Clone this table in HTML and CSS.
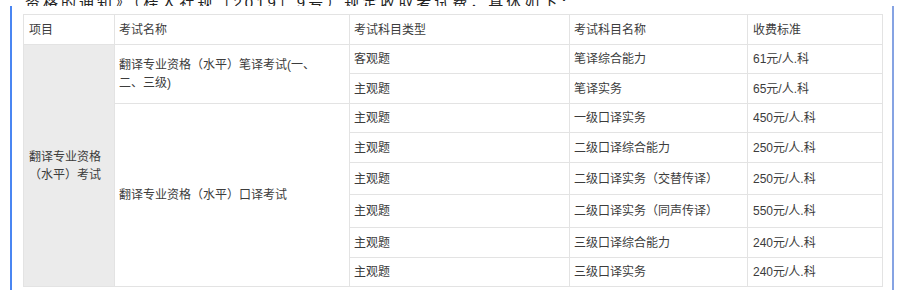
FILE: index.html
```html
<!DOCTYPE html>
<html lang="zh-CN">
<head>
<meta charset="utf-8">
<title>收费标准</title>
<link rel="stylesheet" href="styles.css">
</head>
<body>
<p class="lead">资格的通知》（桂人社规〔2019〕9号）规定收取考试费，具体如下：</p>
<div class="frame">
  <table class="fees">
    <colgroup>
      <col class="c1"><col class="c2"><col class="c3"><col class="c4"><col class="c5">
    </colgroup>
    <thead>
      <tr class="h30">
        <th>项目</th>
        <th>考试名称</th>
        <th>考试科目类型</th>
        <th>考试科目名称</th>
        <th>收费标准</th>
      </tr>
    </thead>
    <tbody>
      <tr class="h29">
        <td rowspan="9" class="proj">翻译专业资格（水平）考试</td>
        <td rowspan="2" class="exam">翻译专业资格（水平）笔译考试(一、二、三级)</td>
        <td>客观题</td>
        <td>笔译综合能力</td>
        <td>61元/人.科</td>
      </tr>
      <tr class="h30">
        <td>主观题</td>
        <td>笔译实务</td>
        <td>65元/人.科</td>
      </tr>
      <tr class="h29">
        <td rowspan="7" class="exam">翻译专业资格（水平）口译考试</td>
        <td>主观题</td>
        <td>一级口译实务</td>
        <td>450元/人.科</td>
      </tr>
      <tr class="h30">
        <td>主观题</td>
        <td>二级口译综合能力</td>
        <td>250元/人.科</td>
      </tr>
      <tr class="h32">
        <td>主观题</td>
        <td>二级口译实务（交替传译）</td>
        <td>250元/人.科</td>
      </tr>
      <tr class="h33">
        <td>主观题</td>
        <td>二级口译实务（同声传译）</td>
        <td>550元/人.科</td>
      </tr>
      <tr class="h30">
        <td>主观题</td>
        <td>三级口译综合能力</td>
        <td>240元/人.科</td>
      </tr>
      <tr class="h29">
        <td>主观题</td>
        <td>三级口译实务</td>
        <td>240元/人.科</td>
      </tr>
    </tbody>
  </table>
</div>
</body>
</html>
```
FILE: styles.css
```css
html, body {
  margin: 0;
  padding: 0;
  background: #ffffff;
}

body {
  font-family: "Liberation Sans", "Noto Sans CJK SC", sans-serif;
  color: #3c3c3c;
  width: 902px;
  height: 308px;
  overflow: hidden;
}

.lead {
  margin: 0;
  height: 6px;
  overflow: hidden;
  padding-left: 25px;
  font-size: 15px;
  letter-spacing: 3px;
  line-height: 6px;
  color: #222;
  white-space: nowrap;
}

.frame {
  margin-left: 10px;
  width: 884px;
  height: 284px;
  border-left: 2px solid #4a86f2;
  border-right: 2px solid #86a3e3;
  padding-top: 8px;
  box-sizing: border-box;
}

.fees {
  margin-left: 11px;
  width: 859px;
  border-collapse: collapse;
  table-layout: fixed;
  font-size: 12px;
  border: 1px solid #d8d8d8;
}

.c1 { width: 91px; }
.c2 { width: 235px; }
.c3 { width: 220px; }
.c4 { width: 178px; }
.c5 { width: 135px; }

.fees th,
.fees td {
  border: 1px solid #e3e3e3;
  padding: 0 4px;
  text-align: left;
  vertical-align: middle;
  font-weight: normal;
  line-height: 18px;
  color: #3c3c3c;
}

.fees th:first-child,
.fees td.proj {
  padding-left: 5px;
}

.fees th:last-child,
.fees td:last-child {
  padding-left: 5px;
}

.fees td.proj {
  background: #ebebeb;
  padding-right: 5px;
}

.fees td.exam {
  padding-right: 24px;
}

.h29 { height: 29px; }
.h30 { height: 30px; }
.h32 { height: 32px; }
.h33 { height: 33px; }
```
